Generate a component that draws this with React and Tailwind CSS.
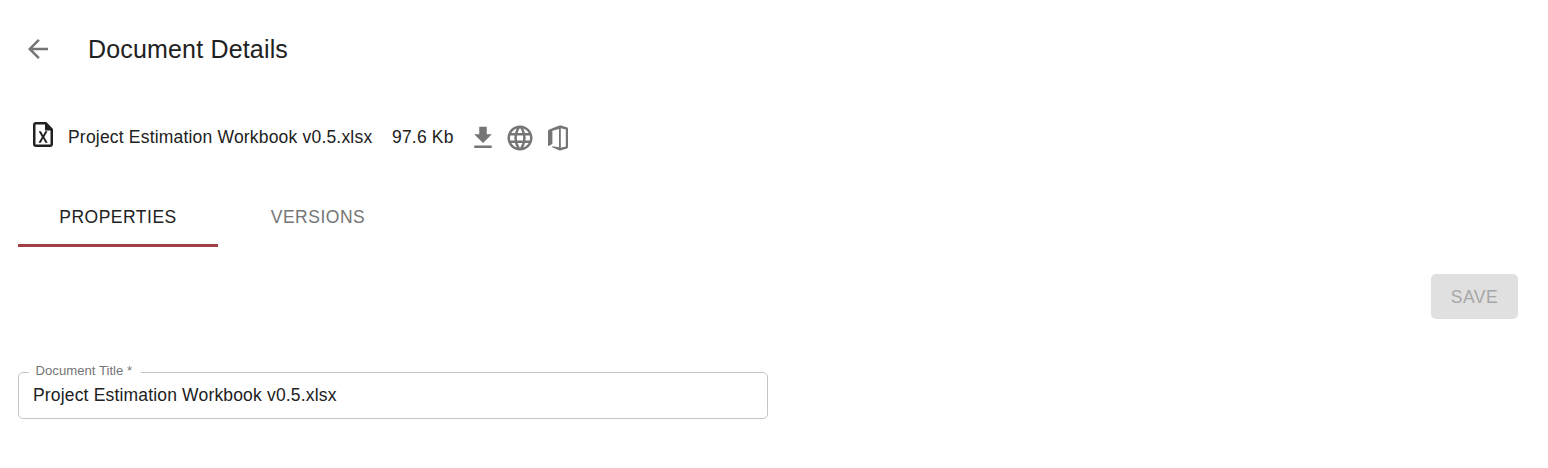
function Icon({ d, className }) {
  return (
    <svg viewBox="0 0 24 24" className={`block shrink-0 fill-current ${className}`} aria-hidden="true">
      <path d={d} />
    </svg>
  );
}

const arrowBack = "M20 11H7.83l5.59-5.59L12 4l-8 8 8 8 1.41-1.41L7.83 13H20v-2z";
const download = "M19 9h-4V3H9v6H5l7 7 7-7zM5 18v2h14v-2H5z";
const globe =
  "M11.99 2C6.47 2 2 6.48 2 12s4.47 10 9.99 10C17.52 22 22 17.52 22 12S17.52 2 11.99 2zm6.93 6h-2.95c-.32-1.25-.78-2.45-1.38-3.56 1.84.63 3.37 1.91 4.33 3.56zM12 4.04c.83 1.2 1.48 2.53 1.91 3.96h-3.82c.43-1.43 1.08-2.76 1.91-3.96zM4.26 14C4.1 13.36 4 12.69 4 12s.1-1.36.26-2h3.38c-.08.66-.14 1.32-.14 2s.06 1.34.14 2H4.26zm.82 2h2.95c.32 1.25.78 2.45 1.38 3.56-1.84-.63-3.37-1.9-4.33-3.56zm2.95-8H5.08c.96-1.66 2.49-2.93 4.33-3.56C8.81 5.55 8.35 6.75 8.03 8zM12 19.96c-.83-1.2-1.48-2.53-1.91-3.96h3.82c-.43 1.43-1.08 2.76-1.91 3.96zM14.34 14H9.66c-.09-.66-.16-1.32-.16-2s.07-1.35.16-2h4.68c.09.65.16 1.32.16 2s-.07 1.34-.16 2zm.25 5.56c.6-1.11 1.06-2.31 1.38-3.56h2.95c-.96 1.65-2.49 2.93-4.33 3.56zM16.36 14c.08-.66.14-1.32.14-2s-.06-1.34-.14-2h3.38c.16.64.26 1.31.26 2s-.1 1.36-.26 2h-3.38z";

function ExcelFileIcon() {
  return (
    <svg viewBox="0 0 20 25" className="block h-[25px] w-5 shrink-0" fill="none" aria-hidden="true">
      <path d="M2.8 1.25H12.8L18.75 7.4V22.2a1.55 1.55 0 0 1-1.55 1.55H2.8a1.55 1.55 0 0 1-1.55-1.55V2.8A1.55 1.55 0 0 1 2.8 1.25Z" stroke="#212121" strokeWidth="2.5" />
      <path d="M12 1v7.5h7V7L13.3 1Z" fill="#212121" />
      <path d="M5.7 9.2H8L10.1 13.2 12.2 9.2H14.5L11.3 14.9 14.7 20.8H12.4L10.1 16.6 7.8 20.8H5.5L8.9 14.9Z" fill="#212121" />
    </svg>
  );
}

function OfficeIcon() {
  return (
    <svg viewBox="0 0 20 26" className="block h-[26px] w-5 shrink-0 fill-current" aria-hidden="true">
      <path fillRule="evenodd" d="M0 6.6Q0 5.1 1.2 4.6L10.7.8Q12 .3 13 .5L18.8 2.2Q20 2.6 20 3.8V22Q20 23.1 19 23.4L13 25.3Q12 25.6 11 25.2L4.8 22.5Q3.7 22 4 21.3L11 22.2V4L4.4 5.8V18.2Q4.4 18.9 3.8 19.3L1.3 20.7Q0 21.4 0 19.8ZM12.8 3.2V22.8L17.8 21.5V4.4Z" />
    </svg>
  );
}

export default function App() {
  return (
    <main className="h-[468px] w-full overflow-hidden bg-white pr-[30px] pl-[18px] font-['Liberation_Sans',Arial,sans-serif] text-[17.5px] text-[#212121]">
      <header className="flex h-[98px] items-center pl-[5px]">
        <button type="button" aria-label="Back" className="text-[#757575]">
          <Icon d={arrowBack} className="size-[30px]" />
        </button>
        <h1 className="ml-[35px] text-[25px] leading-[40px] tracking-[0.17px]">Document Details</h1>
      </header>

      <section className="flex h-20 items-center pl-[15px]">
        <div className="pb-[8px]">
          <ExcelFileIcon />
        </div>
        <span className="ml-[15px] w-[324px] pb-0.5 tracking-[0.19px] whitespace-nowrap">Project Estimation Workbook v0.5.xlsx</span>
        <span className="w-[76px] pb-0.5 tracking-[0.19px] whitespace-nowrap">97.6 Kb</span>
        <div className="flex items-center text-[#757575]">
          <Icon d={download} className="size-[30px]" />
          <Icon d={globe} className="ml-[7px] size-[30px]" />
          <div className="ml-[13px]">
            <OfficeIcon />
          </div>
        </div>
      </section>

      <nav className="mt-[9px] flex h-[60px]">
        <button type="button" className="w-[200px] border-b-[3px] border-[#a13f47] pt-[3px] tracking-[0.5px]">PROPERTIES</button>
        <button type="button" className="w-[200px] tracking-[0.5px] text-[#757575]">VERSIONS</button>
      </nav>

      <div className="mt-[27px] flex justify-end">
        <button type="button" disabled className="h-[45px] w-[87px] rounded-[5px] bg-[#e0e0e0] pt-0.5 tracking-[0.5px] text-[#a6a6a6]">SAVE</button>
      </div>

      <fieldset className="mt-[43px] h-[57px] w-[750px] rounded-[5px] border border-[#c4c4c4] px-[10px]">
        <legend className="h-[21px] w-[112px] pl-[6.5px] text-[13.125px] leading-[17px] tracking-[0.03px] whitespace-nowrap text-[#757575]">Document Title *</legend>
        <input
          aria-label="Document Title"
          defaultValue="Project Estimation Workbook v0.5.xlsx"
          className="block h-6 w-full pl-1 tracking-[0.17px] outline-none"
        />
      </fieldset>
    </main>
  );
}
